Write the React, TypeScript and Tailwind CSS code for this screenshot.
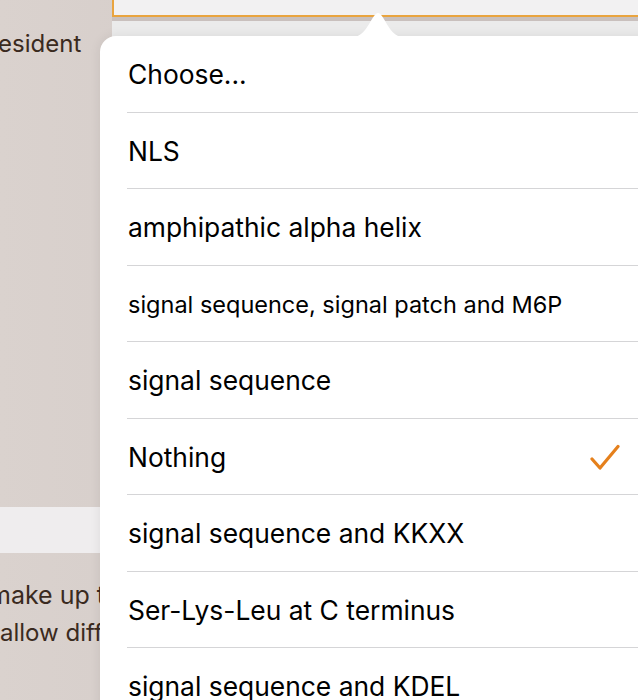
const options = [
  "Choose...",
  "NLS",
  "amphipathic alpha helix",
  "signal sequence, signal patch and M6P",
  "signal sequence",
  "Nothing",
  "signal sequence and KKXX",
  "Ser-Lys-Leu at C terminus",
  "signal sequence and KDEL",
];

const selected = "Nothing";

function Check() {
  return (
    <svg width="30" height="27" viewBox="0 0 30 27" fill="none">
      <path
        d="M2 15 L10 24 L28 2.5"
        stroke="#e5801c"
        strokeWidth="3.2"
        strokeLinecap="round"
        strokeLinejoin="round"
      />
    </svg>
  );
}

export default function App() {
  return (
    <div
      className="relative h-[700px] w-[638px] overflow-hidden bg-gradient-to-r from-[#dad2ce] to-[#cdc4c1] text-[#3a2a20]"
      style={{ fontFamily: "Inter, 'Noto Sans', sans-serif" }}
    >
      <div className="flex h-[507px]">
        <div className="w-[112px] pt-[29px]">
          <div className="-ml-[17px] text-[24px] leading-[30px]">Resident</div>
        </div>
        <div className="flex flex-1 flex-col">
          <div className="h-[17px] border-2 border-t-0 border-r-0 border-[#e9a43f] bg-[#f2f1f2]" />
          <div className="h-[4px] bg-[#c9c0bd]" />
          <div className="h-[40px] bg-[#ebebeb]" />
        </div>
      </div>
      <div className="h-[46px] bg-[#efedee]" />
      <div className="pt-[23px] text-[25px] leading-[38px]">
        <div className="-ml-[11px]">make up the</div>
        <div className="text-[24px]">allow diffusion</div>
      </div>

      <div className="absolute left-[100px] top-[36px] w-[560px] rounded-tl-[16px] bg-white shadow-[0_0_12px_rgba(0,0,0,0.08)]">
        <svg
          className="absolute -top-[23px] left-[253px]"
          width="50"
          height="24"
          viewBox="0 0 50 24"
        >
          <path d="M0 24 C14 24 19 0 25 0 C31 0 36 24 50 24 Z" fill="#ffffff" />
        </svg>
        <ul className="text-[26.4px] text-black">
          {options.map((o) => (
            <li
              key={o}
              className="ml-[27px] flex h-[76.5px] items-center justify-between border-b border-[#d5d5d7] pl-[1px] pr-[40px] pt-[3px]"
            >
              <span className={o.length > 30 ? "text-[23.5px]" : ""}>{o}</span>
              {o === selected && <Check />}
            </li>
          ))}
        </ul>
      </div>
    </div>
  );
}
